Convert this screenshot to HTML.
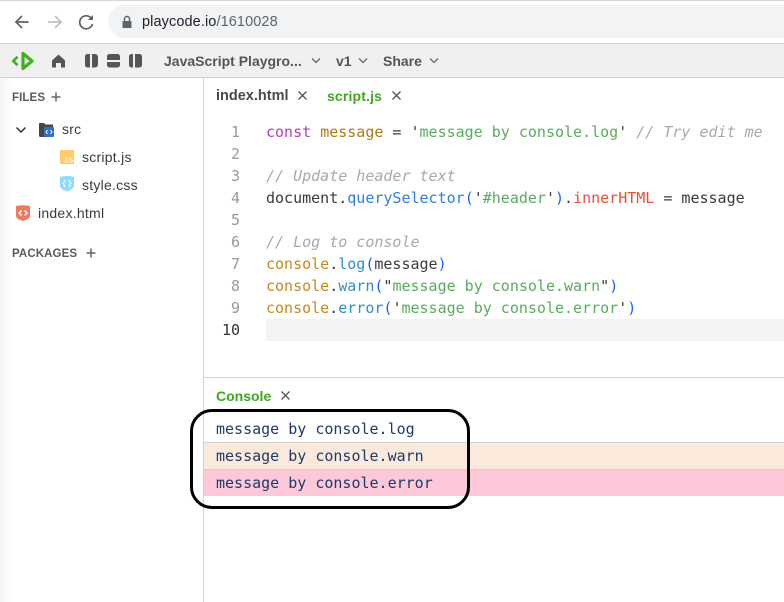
<!DOCTYPE html>
<html><head><meta charset="utf-8"><style>
html,body{margin:0;padding:0;background:#fff}
#p{position:relative;width:784px;height:602px;overflow:hidden;background:#fff;font-family:"Liberation Sans",sans-serif}
#p>*{position:absolute}
.t{white-space:nowrap;line-height:20px;height:20px}
.ui{color:#555;font-weight:700;font-size:14px}
.f{color:#3a3a3c;font-size:14px;letter-spacing:.25px}
.h{color:#5a5a5a;font-weight:700;font-size:11.500px;letter-spacing:.1px}
.m{font-family:"DejaVu Sans Mono",monospace;font-size:15px;line-height:22px;height:22px;white-space:pre;color:#3a3a3c}
.n{color:#999;width:36px;text-align:right;left:204px}
.c{color:#a9a9a9;font-style:italic}.s{color:#5aab5f}.b{color:#1f5fff}.y{color:#c58a1d}.l{color:#2f8fc9}
.o{color:#1f3a68}
</style></head><body><div id="p">
<div style="left:0;top:0;width:784px;height:1px;background:#d8d8d8"></div>
<div style="left:0;top:43px;width:784px;height:1px;background:#d2d2d2"></div>
<div style="left:0;top:44px;width:784px;height:33px;background:#f0f0f0"></div>
<div style="left:0;top:77px;width:784px;height:1px;background:#d2d2d2"></div>
<div style="left:0;top:78px;width:12px;height:524px;background:linear-gradient(90deg,#f4f4f4,#fff)"></div>
<div style="left:203px;top:78px;width:1px;height:524px;background:#d2d2d2"></div>
<div style="left:108px;top:5px;width:700px;height:33px;border-radius:17px;background:#f1f3f4"></div>

<svg style="left:0;top:0" width="110" height="44" fill="none" stroke-width="1.700">
<path d="M28.500 22H16M22 16l-6 6 6 6" stroke="#5f6368"/>
<path d="M48 22H61M55 16l6 6-6 6" stroke="#bdc1c6"/>
<path d="M91.500 18.500a6.500 6.500 0 1 0 1 5.500" stroke="#5f6368"/><path d="M93 15v5h-5z" fill="#5f6368" stroke="none"/>
</svg>
<svg style="left:120px;top:14px" width="14" height="16"><path d="M4.500 7V5a2.500 2.500 0 0 1 5 0v2" fill="none" stroke="#5f6368" stroke-width="1.500"/><rect x="2.500" y="7" width="9" height="7" rx="1" fill="#5f6368"/></svg>
<div class="t" style="left:142px;top:12px;font-size:14.500px;color:#202124;letter-spacing:.1px">playcode.io<span style="color:#5f6368">/1610028</span></div>

<svg style="left:0;top:44px" width="150" height="33">
<path d="M17.500 12.800L13.300 17l4.200 4.200" fill="none" stroke="#3fae1f" stroke-width="2.600"/>
<path d="M23 9.500L32 17 23 24.500z" fill="none" stroke="#3fae1f" stroke-width="3.200" stroke-linejoin="round"/>
<path d="M52 23.500v-7L58.500 10.500 65 16.500v7h-4v-4.500h-5v4.500z" fill="#555"/>
<path d="M87.500 10h2.500v13.500h-2.500a2.500 2.500 0 0 1-2.500-2.500v-8.500a2.500 2.500 0 0 1 2.500-2.500zM92 10h3a3 3 0 0 1 3 3v7.500a3 3 0 0 1-3 3h-3z" fill="#555"/>
<path d="M107 12.500a2.500 2.500 0 0 1 2.500-2.500h8a2.500 2.500 0 0 1 2.500 2.500V16h-13zM107 18h13v3a2.500 2.500 0 0 1-2.500 2.500h-8a2.500 2.500 0 0 1-2.500-2.500z" fill="#555"/>
<path d="M131.500 10h1.500v13.500h-1.500a2.500 2.500 0 0 1-2.500-2.500v-8.500a2.500 2.500 0 0 1 2.500-2.500zM135 10h4.500a2.500 2.500 0 0 1 2.500 2.500v8.500a2.500 2.500 0 0 1-2.500 2.500H135z" fill="#555"/>
</svg>

<div class="t ui" style="left:164px;top:51px">JavaScript Playgro...</div>
<div class="t ui" style="left:336px;top:51px">v1</div>
<div class="t ui" style="left:383px;top:51px">Share</div>
<svg style="left:300px;top:50px" width="150" height="20" fill="none" stroke="#666" stroke-width="1.300">
<path d="M12 8.500l4 4 4-4M59 8.500l4 4 4-4M130 8.500l4 4 4-4"/></svg>

<div class="t h" style="left:12px;top:88px">FILES</div>
<svg style="left:50px;top:90px" width="12" height="14"><path d="M6 2.500v9M1.500 7h9" stroke="#666" stroke-width="1.500"/></svg>
<svg style="left:14px;top:124px" width="14" height="12"><path d="M2.500 3.500L7 8l4.500-4.500" fill="none" stroke="#333" stroke-width="1.500"/></svg>
<svg style="left:38px;top:121px" width="18" height="17">
<path d="M1 2h5l1.500 1.500H15V7H9v9H2.500A1.500 1.500 0 0 1 1 14.500z" fill="#47474b"/>
<rect x="6" y="6" width="10" height="10" rx="1" fill="#2f6fc4"/>
<path d="M9.500 9L8 11l1.500 2M12.500 9L14 11l-1.500 2" fill="none" stroke="#fff" stroke-width="1"/></svg>
<div class="t f" style="left:62px;top:119px">src</div>
<svg style="left:60px;top:150px" width="14" height="14"><rect width="14" height="14" fill="#fdcb6e"/><text x="4" y="12.500" font-family="Liberation Sans" font-size="7.500" fill="#fff" letter-spacing=".5">JS</text></svg>
<div class="t f" style="left:82px;top:147px">script.js</div>
<svg style="left:60px;top:176px" width="14" height="16"><path d="M0 1q7-2 14 0v9q0 3-7 5.500Q0 13 0 10z" fill="#8edcfd"/><path d="M5.500 4.500Q4 4.500 4 6v.8L3 7.500l1 .7V9q0 1.500 1.500 1.500M8.500 4.500Q10 4.500 10 6v.8l1 .7-1 .7V9q0 1.500-1.500 1.500" fill="none" stroke="#fff" stroke-width="1"/></svg>
<div class="t f" style="left:82px;top:175px">style.css</div>
<svg style="left:16px;top:205px" width="14" height="17"><path d="M0 1q7-1.500 14 0v10q0 3-7 5Q0 14 0 11z" fill="#ef7a5d"/><path d="M5.500 5.500L3 8l2.500 2.500M8.500 5.500L11 8l-2.500 2.500" fill="none" stroke="#fff" stroke-width="1.500"/></svg>
<div class="t f" style="left:38px;top:203px">index.html</div>
<div class="t h" style="left:12px;top:244px">PACKAGES</div>
<svg style="left:85px;top:246px" width="12" height="14"><path d="M6 2.500v9M1.500 7h9" stroke="#666" stroke-width="1.500"/></svg>

<div class="t ui" style="left:216px;top:86px;color:#4a4a4a;font-size:14.500px">index.html</div>
<div class="t ui" style="left:327px;top:86px;color:#3fa81f;font-size:14px;letter-spacing:.15px">script.js</div>
<div class="t ui" style="left:216px;top:386px;color:#3fa81f;font-size:14px">Console</div>
<svg style="left:295px;top:88px" width="110" height="16" stroke="#555" stroke-width="1.300" fill="none"><path d="M3.500 3.500l8 8M11.500 3.500l-8 8M97.500 3.500l8 8M105.500 3.500l-8 8"/></svg>
<svg style="left:279px;top:388px" width="14" height="16" stroke="#555" stroke-width="1.300" fill="none"><path d="M2.500 3.500l8 8M10.500 3.500l-8 8"/></svg>

<div style="left:266px;top:319px;width:518px;height:22px;background:#f3f3f3"></div>
<div class="m n" style="top:121px">1</div><div class="m n" style="top:143px">2</div><div class="m n" style="top:165px">3</div><div class="m n" style="top:187px">4</div><div class="m n" style="top:209px">5</div><div class="m n" style="top:231px">6</div><div class="m n" style="top:253px">7</div><div class="m n" style="top:275px">8</div><div class="m n" style="top:297px">9</div><div class="m n" style="top:319px;color:#333">10</div>

<div class="m" style="left:266px;top:121px"><span style="color:#b93db0">const</span> <span style="color:#b0781a">message</span> = '<span class="s">message by console.log</span>' <span class="c">// Try edit me</span></div>
<div class="m c" style="left:266px;top:165px">// Update header text</div>
<div class="m" style="left:266px;top:187px">document.<span style="color:#2f7fe0">querySelector</span><span class="b">(</span>'<span class="s">#header</span>'<span class="b">)</span>.<span style="color:#e8503a">innerHTML</span> = message</div>
<div class="m c" style="left:266px;top:231px">// Log to console</div>
<div class="m" style="left:266px;top:253px"><span class="y">console</span>.<span class="l">log</span><span class="b">(</span>message<span class="b">)</span></div>
<div class="m" style="left:266px;top:275px"><span class="y">console</span>.<span class="l">warn</span><span class="b">(</span>"<span class="s">message by console.warn</span>"<span class="b">)</span></div>
<div class="m" style="left:266px;top:297px"><span class="y">console</span>.<span class="l">error</span><span class="b">(</span>'<span class="s">message by console.error</span>'<span class="b">)</span></div>

<div style="left:204px;top:377px;width:580px;height:1px;background:#d2d2d2"></div>
<div style="left:204px;top:442px;width:580px;height:1px;background:#d2d2d2"></div>
<div style="left:204px;top:443px;width:580px;height:26px;background:#fbeadc"></div>
<div style="left:204px;top:469px;width:580px;height:1px;background:#d2d2d2"></div>
<div style="left:204px;top:470px;width:580px;height:26px;background:#fdc8d8"></div>
<div class="m o" style="left:216px;top:418px">message by console.log</div>
<div class="m o" style="left:216px;top:445px">message by console.warn</div>
<div class="m o" style="left:216px;top:472px">message by console.error</div>
<div style="left:190px;top:409px;width:274px;height:94px;border:3px solid #000;border-radius:22px"></div>
</div></body></html>
